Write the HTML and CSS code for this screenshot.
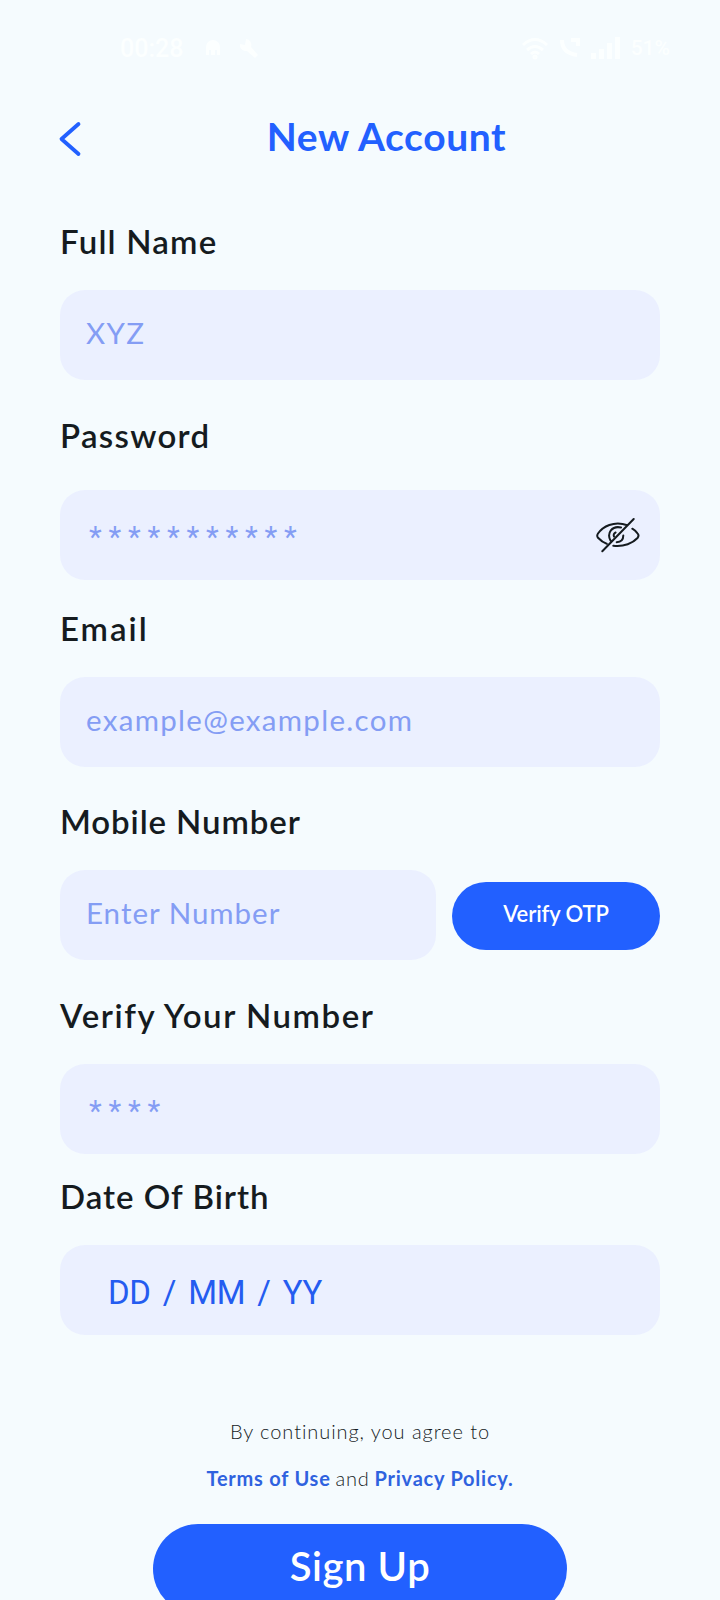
FILE: index.html
```html
<!DOCTYPE html>
<html lang="en">
<head>
<meta charset="utf-8">
<title>New Account</title>
<link rel="stylesheet" href="styles.css">
</head>
<body>
<div class="screen">
  <div class="status">
    <div class="status-left">
      <span class="clock">00:28</span>
      <svg width="20" height="20" viewBox="0 0 20 20"><path d="M3 17V9a7 7 0 0 1 14 0v8h-3v-5h-2v5H8v-5H6v5z" fill="currentColor"/></svg>
      <svg width="22" height="22" viewBox="0 0 22 22"><path d="M3 7l5 1 1-6a6 6 0 0 1 5 8l7 8-3 3-8-7a6 6 0 0 1-7-7z" fill="currentColor"/></svg>
    </div>
    <div class="status-right">
      <svg width="28" height="24" viewBox="0 0 28 24" fill="none" stroke="currentColor" stroke-width="3"><path d="M2 9q12-11 24 0M6 14q8-7 16 0M10 18q4-4 8 0"/><circle cx="14" cy="21" r="1"/></svg>
      <svg width="22" height="22" viewBox="0 0 22 22" fill="none" stroke="currentColor" stroke-width="4"><path d="M3 3q0 13 15 15M12 3h7v6"/></svg>
      <svg width="30" height="22" viewBox="0 0 30 22" fill="currentColor"><path d="M0 16h5v6H0zM8 12h5v10H8zM16 6h5v16h-5zM24 0h5v22h-5z"/></svg>
      <span class="battery">51%</span>
    </div>
  </div>
  <header class="header">
    <svg class="back" width="24" height="36" viewBox="0 0 24 36"><path d="M20.500 3 3.500 18 20.500 33" fill="none" stroke="currentColor" stroke-width="3.8" stroke-linecap="round" stroke-linejoin="round"/></svg>
    <h1 class="title">New Account</h1>
  </header>
  <main class="form">
    <section class="group">
      <label class="label">Full Name</label>
      <div class="field">XYZ</div>
    </section>
    <section class="group group-password">
      <label class="label label-password">Password</label>
      <div class="field field-stars">***********
        <svg class="eye" width="46" height="40" viewBox="0 0 46 40" fill="none" stroke="currentColor" stroke-width="2" stroke-linecap="round"><path d="M33.300 11.300C20 6 8.500 13 4 19.500c-1.200 1.700-1.200 2.700 0 4.300C6.500 26.500 9.500 28.800 12.700 29.700M19.300 31.700C30 33 39 29 43.500 24c1.500-1.800 1.500-3 0-4.700C42 17.500 40.500 16 38.300 14.700M8.300 37.300 39.700 5M16.500 26.500C12.500 19 18 11.500 27 13.500"/><path d="M29.300 21.500c0 4-2.500 6.500-6.600 6.700M20 22.500c-.8-1.500 0-3.300 1.600-4"/></svg>
      </div>
    </section>
    <section class="group group-email">
      <label class="label label-email">Email</label>
      <div class="field">example@example.com</div>
    </section>
    <section class="group">
      <label class="label label-mobile">Mobile Number</label>
      <div class="row">
        <div class="field field-number">Enter Number</div>
        <button class="verify">Verify OTP</button>
      </div>
    </section>
    <section class="group">
      <label class="label label-verify">Verify Your Number</label>
      <div class="field field-stars">****</div>
    </section>
    <section class="group group-birth">
      <label class="label label-birth">Date Of Birth</label>
      <div class="field field-date">DD / MM / YY</div>
    </section>
  </main>
  <footer class="footer">
    <p class="legal">By continuing, you agree to</p>
    <p class="legal legal-links"><a class="link">Terms of Use</a><span>and</span><a class="link">Privacy Policy.</a></p>
    <button class="signup">Sign Up</button>
  </footer>
</div>
</body>
</html>
```
FILE: styles.css
```css
* { box-sizing: border-box; margin: 0; padding: 0; }
html, body { height: 1600px; overflow: hidden; }
body { background: #f5fbfe; font-family: Lato, "Open Sans", sans-serif; color: #151b1f; }
.screen { height: 1600px; padding: 0 60px; display: flex; flex-direction: column; overflow: hidden; }

.status { flex: none; height: 96px; margin: 0 -10px 0 0; padding-left: 60px; display: flex; justify-content: space-between; align-items: center; color: #fcffff; }
.status-left, .status-right { display: flex; align-items: center; }
.status-left { gap: 14px; }
.status-right { gap: 10px; }
.clock { font: 500 25px Roboto, sans-serif; margin-right: 6px; }
.battery { font: 500 21px Roboto, sans-serif; }

.header { flex: none; height: 127px; padding-top: 17px; display: flex; align-items: flex-start; color: #2260ff; }
.back { flex: none; margin: 8px 0 0 -2px; }
.title { flex: 1; padding-left: 31px; font-size: 39px; line-height: 46px; font-weight: 700; letter-spacing: .6px; text-align: center; }

.group { display: flex; flex-direction: column; gap: 31px; margin-bottom: 37px; }
.group-password { gap: 37px; margin-bottom: 30px; }
.group-email { margin-bottom: 36px; }
.group-birth { margin-top: -13px; margin-bottom: 0; }
.label { height: 36px; line-height: 36px; font-size: 33px; font-weight: 600; letter-spacing: 1.2px; white-space: nowrap; }
.label-password { letter-spacing: 1.3px; }
.label-email { letter-spacing: 2px; }
.label-mobile { letter-spacing: .9px; }
.label-verify { letter-spacing: 1.55px; }
.label-birth { letter-spacing: 1px; }

.field { position: relative; height: 90px; padding: 25px 26px 0; border-radius: 25px; background: #ebf0ff; color: #849df4; font-size: 29.5px; line-height: 35px; letter-spacing: 1.3px; white-space: nowrap; }
.field-stars { padding: 30px 29px 0; font-family: Roboto, sans-serif; letter-spacing: 6.8px; display: flex; justify-content: space-between; }
.eye { margin: -6px -9px 0 0; color: #151b1f; }
.field-date { padding: 28px 0 0 48px; color: #245cf0; font: 33px/39px Roboto, sans-serif; letter-spacing: -.3px; word-spacing: 4.2px; }
.row { display: flex; align-items: center; gap: 16px; }
.field-number { width: 376px; letter-spacing: 1px; }
.verify { width: 208px; height: 68px; border: 0; border-radius: 34px; background: #2260ff; color: #fff; font: 600 22px/26px Lato, sans-serif; letter-spacing: -.1px; padding-bottom: 4px; position: relative; top: 1px; }

.footer { display: flex; flex-direction: column; align-items: center; margin-top: 84px; }
.legal { font-size: 20px; line-height: 24px; font-weight: 300; letter-spacing: .93px; margin-bottom: 23px; white-space: nowrap; }
.legal-links { display: flex; gap: 5px; margin-bottom: 34px; letter-spacing: .76px; }
.link { color: #2f62df; font-weight: 700; }
.signup { flex: none; width: 414px; height: 90px; border: 0; border-radius: 45px; background: #2260ff; color: #fff; font: 600 40px/48px Lato, sans-serif; letter-spacing: .6px; padding-bottom: 6px; }
```
